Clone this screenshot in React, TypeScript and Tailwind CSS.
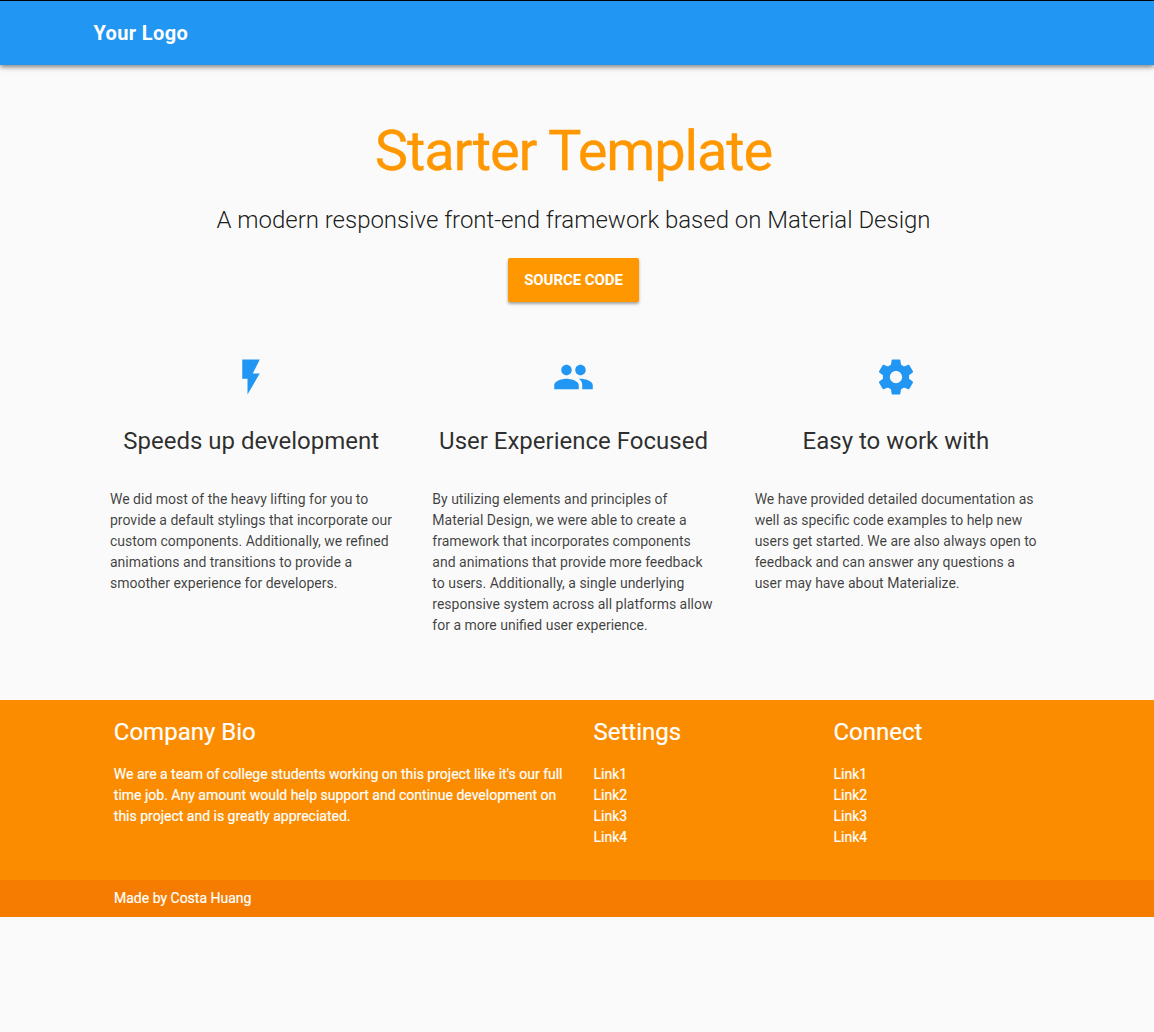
import { ReactNode } from "react";

const features = [
  {
    title: "Speeds up development",
    iconSize: "h-[42px] w-[42px]",
    icon: "M7 2v11h3v9l7-12h-4l4-8z",
    lines: ["We did most of the heavy lifting for you to", "provide a default stylings that incorporate our", "custom components. Additionally, we refined", "animations and transitions to provide a", "smoother experience for developers."],
  },
  {
    title: "User Experience Focused",
    iconSize: "h-[42px] w-[43px]",
    icon: "M16 11c1.66 0 2.99-1.34 2.99-3S17.66 5 16 5c-1.66 0-3 1.34-3 3s1.34 3 3 3zm-8 0c1.66 0 2.99-1.34 2.99-3S9.66 5 8 5C6.34 5 5 6.34 5 8s1.34 3 3 3zm0 2c-2.33 0-7 1.17-7 3.5V19h14v-2.5c0-2.33-4.67-3.5-7-3.5zm8 0c-.29 0-.62.02-.97.05 1.16.84 1.97 1.97 1.97 3.45V19h6v-2.5c0-2.33-4.67-3.5-7-3.5z",
    lines: ["By utilizing elements and principles of", "Material Design, we were able to create a", "framework that incorporates components", "and animations that provide more feedback", "to users. Additionally, a single underlying", "responsive system across all platforms allow", "for a more unified user experience."],
  },
  {
    title: "Easy to work with",
    iconSize: "h-[42px] w-[42px]",
    icon: "M19.43 12.98c.04-.32.07-.64.07-.98s-.03-.66-.07-.98l2.11-1.65c.19-.15.24-.42.12-.64l-2-3.46c-.12-.22-.39-.3-.61-.22l-2.49 1c-.52-.4-1.08-.73-1.69-.98l-.38-2.65C14.46 2.18 14.25 2 14 2h-4c-.25 0-.46.18-.49.42l-.38 2.65c-.61.25-1.17.59-1.69.98l-2.49-1c-.23-.09-.49 0-.61.22l-2 3.46c-.13.22-.07.49.12.64l2.11 1.65c-.04.32-.07.65-.07.98s.03.66.07.98l-2.11 1.65c-.19.15-.24.42-.12.64l2 3.46c.12.22.39.3.61.22l2.49-1c.52.4 1.08.73 1.69.98l.38 2.65c.03.24.24.42.49.42h4c.25 0 .46-.18.49-.42l.38-2.65c.61-.25 1.17-.59 1.69-.98l2.49 1c.23.09.49 0 .61-.22l2-3.46c.12-.22.07-.49-.12-.64l-2.11-1.65zM12 15.5c-1.93 0-3.5-1.57-3.5-3.5s1.57-3.5 3.5-3.5 3.5 1.57 3.5 3.5-1.57 3.5-3.5 3.5z",
    lines: ["We have provided detailed documentation as", "well as specific code examples to help new", "users get started. We are also always open to", "feedback and can answer any questions a", "user may have about Materialize."],
  },
];

function Lines({ lines }: { lines: string[] }) {
  return (
    <>
      {lines.map((line) => (
        <span key={line} className="block whitespace-nowrap">{line}</span>
      ))}
    </>
  );
}

function FooterColumn({ title, className, children }: { title: string; className: string; children: ReactNode }) {
  return (
    <div className={className}>
      <h2 className="mb-[17px] text-2xl leading-[30px]">{title}</h2>
      <div className="text-sm leading-[21px]">{children}</div>
    </div>
  );
}

export default function App() {
  return (
    <div className="min-h-[1032px] bg-[#fafafa] text-black/87 [font-family:Roboto,sans-serif]">
      <header className="relative flex h-[65px] items-center border-t border-black bg-[#2196f3] pl-[93.5px] text-white shadow-[0_2px_5px_rgba(0,0,0,0.5)]">
        <a className="text-xl font-bold tracking-[0.36px]">Your Logo</a>
      </header>

      <main className="flex h-[635px] flex-col pr-[7px]">
        <section className="flex flex-col items-center pt-[58px]">
          <h1 className="whitespace-nowrap text-[56px] leading-[56px] tracking-[-1.12px] text-[#ff9800] [-webkit-text-stroke:0.3px_#ff9800]">Starter Template</h1>
          <p className="mt-[25px] whitespace-nowrap text-2xl font-light leading-8 tracking-[-0.02px] text-black/90">A modern responsive front-end framework based on Material Design</p>
          <button className="mt-[22px] h-11 w-[131px] whitespace-nowrap rounded-xs bg-[#ff9800] text-[15px] font-bold tracking-[-0.06px] text-white shadow-[0_2px_3px_rgba(0,0,0,0.35)]">SOURCE CODE</button>
        </section>
        <section className="mt-[54px] ml-[110px] grid w-[927px] grid-cols-3 gap-x-10">
          {features.map((feature) => (
            <article key={feature.title}>
              <svg viewBox="0 0 24 24" className={`mx-auto fill-[#2196f3] ${feature.iconSize}`}><path d={feature.icon} /></svg>
              <h2 className="mt-[27px] text-center text-2xl leading-8 whitespace-nowrap text-black/83">{feature.title}</h2>
              <p className="mt-8 text-sm leading-[21px] text-black/75"><Lines lines={feature.lines} /></p>
            </article>
          ))}
        </section>
      </main>

      <footer className="text-white">
        <div className="flex h-[180px] bg-[#fb8c00] pt-[17px] pl-[113.8px] [-webkit-text-stroke:0.2px_white]">
          <FooterColumn title="Company Bio" className="w-[479.7px]">
            <Lines lines={["We are a team of college students working on this project like it's our full", "time job. Any amount would help support and continue development on", "this project and is greatly appreciated."]} />
          </FooterColumn>
          {["Settings", "Connect"].map((title) => (
            <FooterColumn key={title} title={title} className="w-60">
              {["Link1", "Link2", "Link3", "Link4"].map((link) => <a key={link} className="block">{link}</a>)}
            </FooterColumn>
          ))}
        </div>
        <div className="h-[37px] bg-[#f57c00] pl-[114px] text-sm leading-9 [-webkit-text-stroke:0.2px_white]">Made by Costa Huang</div>
      </footer>
    </div>
  );
}
